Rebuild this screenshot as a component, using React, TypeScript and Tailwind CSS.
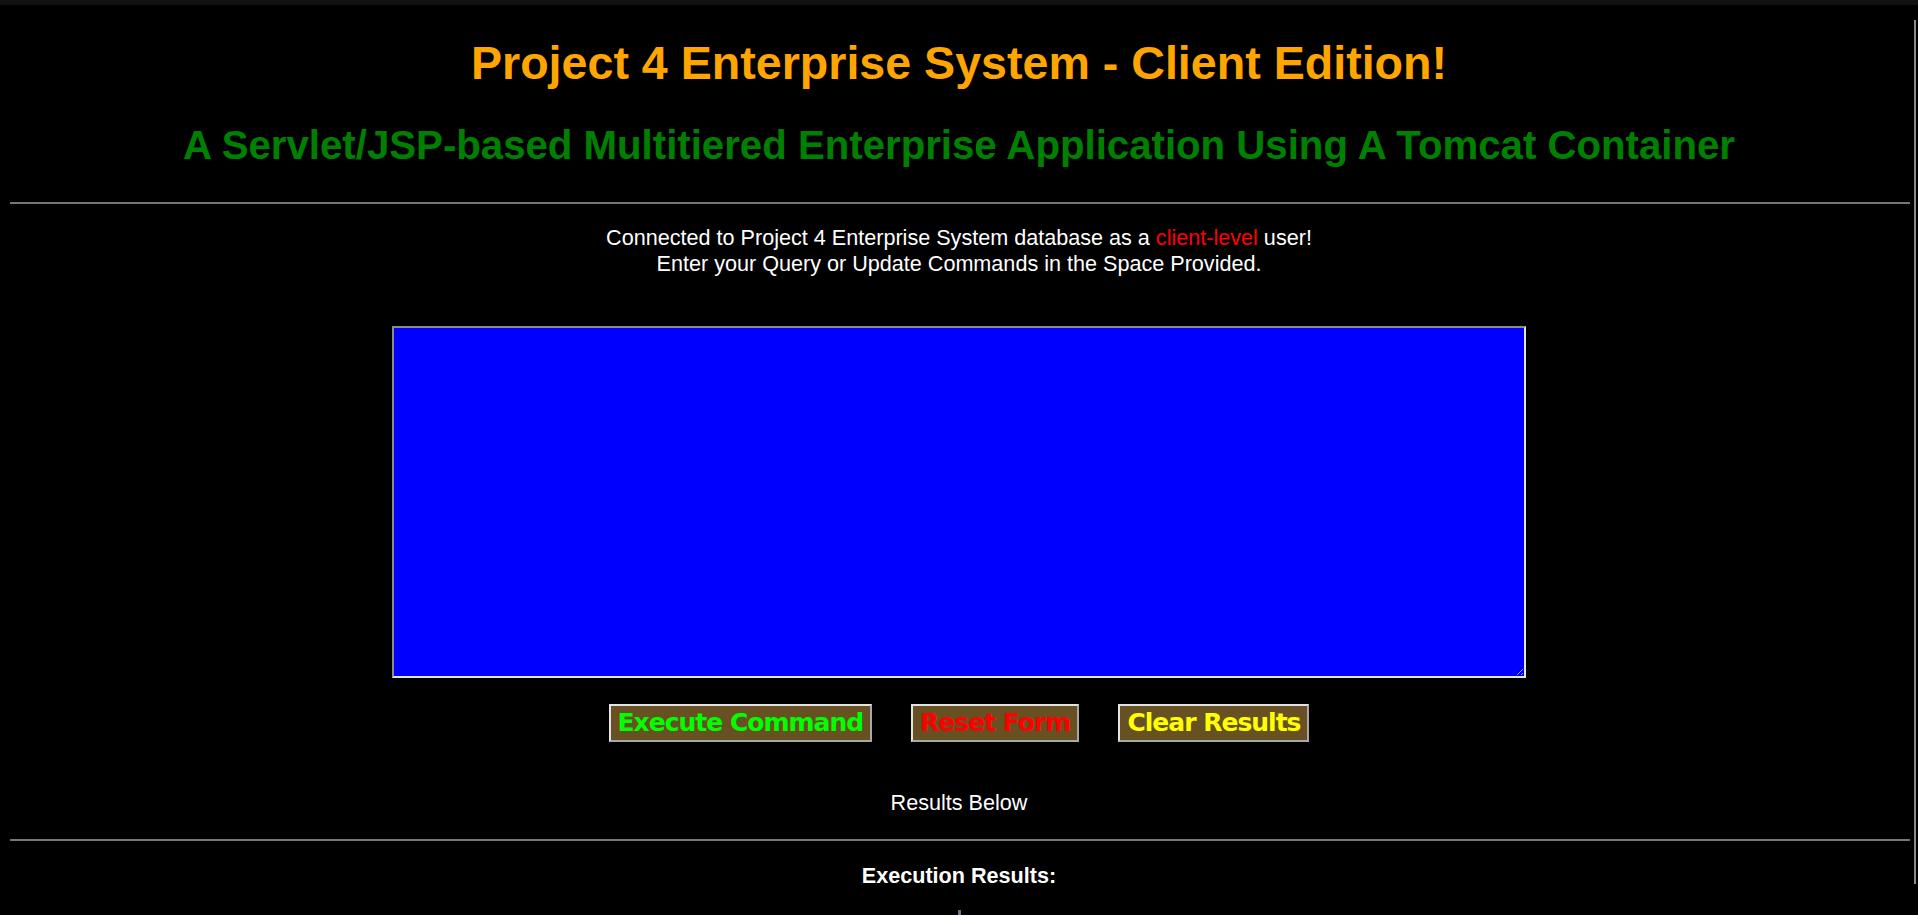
import React from 'react';

const buttons = [
  { label: 'Execute Command', color: 'text-[#00ff00]' },
  { label: 'Reset Form', color: 'text-[#ff0000]' },
  { label: 'Clear Results', color: 'text-[#ffff00]' },
];

const App: React.FC = () => {
  return (
    <div className="relative h-screen overflow-hidden bg-black text-white font-['Liberation_Sans',Arial,sans-serif]">
      {/* top strip */}
      <div className="h-[5px] bg-[#121212]"></div>

      <div className="text-center">
        <h1 className="mt-[35px] text-[46.6px] leading-none font-bold text-[#ffa500]">
          Project 4 Enterprise System - Client Edition!
        </h1>
        <h2 className="mt-[39px] text-[40.2px] leading-none font-bold text-[#008000]">
          A Servlet/JSP-based Multitiered Enterprise Application Using A Tomcat Container
        </h2>
      </div>

      <div className="ml-[10px] mr-[8px] mt-[36px] h-[2px] bg-[#767676]"></div>

      <p className="mt-[21px] text-center text-[21.6px] leading-[26px]">
        Connected to Project 4 Enterprise System database as a <span className="text-[#ff0000]">client-level</span> user!
        <br />
        Enter your Query or Update Commands in the Space Provided.
      </p>

      <textarea
        className="mx-auto mt-[49px] block h-[352px] w-[1134px] border-2 border-t-[#8c8c8c] border-l-[#8c8c8c] border-r-[#e3e3e3] border-b-[#e3e3e3] bg-[#0000ff] text-white outline-none"
        defaultValue=""
      />

      <div className="mt-[26px] flex justify-center gap-[39px]">
        {buttons.map((b) => (
          <button
            key={b.label}
            className={`flex h-[38px] items-center border-2 border-t-[#e3e3e3] border-l-[#e3e3e3] border-r-[#a8a8a8] border-b-[#a8a8a8] bg-[#675021] px-[7px] font-['DejaVu_Sans',Verdana,sans-serif] text-[25px] font-bold tracking-[-1px] ${b.color}`}
          >
            {b.label}
          </button>
        ))}
      </div>

      <p className="mt-[48px] text-center text-[21.6px] leading-[26px]">Results Below</p>

      <div className="ml-[10px] mr-[8px] mt-[23px] h-[2px] bg-[#767676]"></div>

      <p className="mt-[22px] text-center text-[21.6px] leading-[26px] font-bold">Execution Results:</p>

      <div className="mx-auto mt-[21px] h-[6px] w-[3px] bg-[#6b7585]"></div>

      {/* thin scroll indicator on the right edge */}
      <div className="absolute left-[1914px] top-[20px] h-[864px] w-[2px] bg-[#8a8a8a]"></div>
    </div>
  );
};

export default App;
